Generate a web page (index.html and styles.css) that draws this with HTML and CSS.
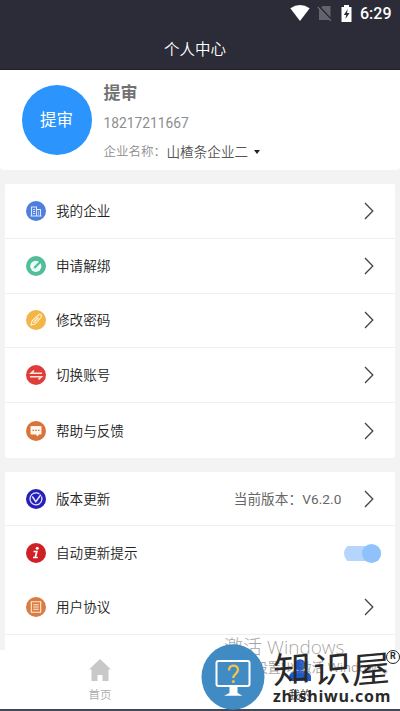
FILE: index.html
```html
<!DOCTYPE html>
<html lang="zh-CN">
<head>
<meta charset="utf-8">
<title>个人中心</title>
<link rel="stylesheet" href="styles.css">
</head>
<body>
<div class="screen">
  <header class="header">
    <div class="status">
      <svg class="wifi" width="20" height="16" viewBox="0 0 20 16"><path d="M.3 3.3Q10-3.2 19.7 3.3L10 16z" fill="#fff"/></svg>
      <svg class="sim" width="16" height="17" viewBox="0 0 16 17"><path d="M5.500 1H13.500v14H2V5z" fill="#62636b"/><path d="M1.500 1.500l13 14" stroke="#2b2c37" stroke-width="2.600"/><path d="M.8 2.200l13 13.600" stroke="#777881" stroke-width="1.200"/></svg>
      <svg class="battery" width="11" height="17" viewBox="0 0 11 17"><path d="M3 0h5v2h2.500v15H.5V2H3z" fill="#fff"/><path d="M6.800 4L2.800 10h2.400l-.7 4 4-6H6z" fill="#2b2c37"/></svg>
      <span class="clock">6:29</span>
    </div>
    <h1 class="title">个人中心</h1>
  </header>

  <section class="profile">
    <div class="avatar">提审</div>
    <div class="details">
      <div class="name">提审</div>
      <div class="phone">18217211667</div>
      <div class="company"><span>企业名称：</span><b>山楂条企业二</b><i class="caret"></i></div>
    </div>
  </section>

  <section class="card">
    <div class="row">
      <svg class="icon" viewBox="0 0 20 20"><circle cx="10" cy="10" r="10" fill="#507edb"/><g fill="none" stroke="#dbe7ff" stroke-width="1.100"><path d="M5.500 15V6h5v9M10.500 8.500h4V15M4.500 15h11M7 8.500h2M7 10.500h2M7 12.500h2M12 11h1M12 13h1"/></g></svg>
      <span class="label">我的企业</span><svg class="arrow" viewBox="0 0 10 18"><path d="M1 1l7.800 8L1 17"/></svg>
    </div>
    <div class="row">
      <svg class="icon" viewBox="0 0 20 20"><circle cx="10" cy="10" r="10" fill="#52bd98"/><circle cx="9.800" cy="10.300" r="5.600" fill="#e9fff7"/><path d="M8.500 11.800l7-7" stroke="#52bd98" stroke-width="2.200"/><path d="M7.500 12.500l2.500-.8-1.700-1.700z" fill="#52bd98"/></svg>
      <span class="label">申请解绑</span><svg class="arrow" viewBox="0 0 10 18"><path d="M1 1l7.800 8L1 17"/></svg>
    </div>
    <div class="row">
      <svg class="icon" viewBox="0 0 20 20"><circle cx="10" cy="10" r="10" fill="#f3b548"/><g fill="none" stroke="#fff3d0" stroke-width="1.100"><path d="M5 15l1-4 6.500-6a1.500 1.500 0 0 1 2.500 2.500L9 14zM7.500 12.500l5-5"/></g></svg>
      <span class="label">修改密码</span><svg class="arrow" viewBox="0 0 10 18"><path d="M1 1l7.800 8L1 17"/></svg>
    </div>
    <div class="row">
      <svg class="icon" viewBox="0 0 20 20"><circle cx="10" cy="10" r="10" fill="#df3e38"/><path d="M16 8.300H5l3-2.800M4 11.700h11.500l-3 2.800" fill="none" stroke="#ffe6df" stroke-width="1.600"/></svg>
      <span class="label">切换账号</span><svg class="arrow" viewBox="0 0 10 18"><path d="M1 1l7.800 8L1 17"/></svg>
    </div>
    <div class="row">
      <svg class="icon" viewBox="0 0 20 20"><circle cx="10" cy="10" r="10" fill="#d97439"/><path d="M5.500 5h9a1 1 0 0 1 1 1v6.500a1 1 0 0 1-1 1H13l-1.500 2-1.500-2H5.500a1 1 0 0 1-1-1V6a1 1 0 0 1 1-1z" fill="#fff5eb"/><path d="M6.500 9.300h1.300M9.300 9.300h1.300M12.100 9.300h1.300" stroke="#bb663a" stroke-width="1.300"/></svg>
      <span class="label">帮助与反馈</span><svg class="arrow" viewBox="0 0 10 18"><path d="M1 1l7.800 8L1 17"/></svg>
    </div>
  </section>

  <section class="card second">
    <div class="row">
      <svg class="icon" viewBox="0 0 20 20"><circle cx="10" cy="10" r="10" fill="#2520b8"/><g fill="none" stroke="#e7e6ff" stroke-width="1.300"><path d="M13.500 5A6 6 0 1 0 15.500 7.500"/><path d="M6.300 7.500l3.500 5.200 5-7" stroke-width="1.500"/></g></svg>
      <span class="label">版本更新</span><span class="version">当前版本：V6.2.0</span><svg class="arrow" viewBox="0 0 10 18"><path d="M1 1l7.800 8L1 17"/></svg>
    </div>
    <div class="row plain">
      <svg class="icon" viewBox="0 0 20 20"><circle cx="10" cy="10" r="10" fill="#cf2026"/><circle cx="11.200" cy="5.300" r="1.500" fill="#fff"/><path d="M7.500 8.500h3.300L9.200 14.500h2.600M7 14.500h3" fill="none" stroke="#fff" stroke-width="1.700"/></svg>
      <span class="label">自动更新提示</span><span class="switch"><i></i></span>
    </div>
    <div class="row">
      <svg class="icon" viewBox="0 0 20 20"><circle cx="10" cy="10" r="10" fill="#d97b43"/><path d="M5.300 4.800h9.400v10.400H5.300zM7.200 7.700h5.600M7.200 10h5.600M7.200 12.300h5.600" fill="none" stroke="#fff0d8" stroke-width="1.100"/></svg>
      <span class="label">用户协议</span><svg class="arrow" viewBox="0 0 10 18"><path d="M1 1l7.800 8L1 17"/></svg>
    </div>
  </section>

  <nav class="tabs">
    <div class="tab">
      <svg width="22" height="22" viewBox="0 0 22 22"><path d="M11 0l11 10.500h-2.500V22h-6v-6h-5v6h-6V10.500H0z" fill="#c8c8c8"/></svg>
      <span>首页</span>
    </div>
    <div class="tab active">
      <svg width="22" height="22" viewBox="0 0 22 22"><circle cx="11" cy="6" r="5.800" fill="#1d58c9"/><path d="M0 22v-4c0-4 5-6.500 11-6.500S22 14 22 18v4z" fill="#1d58c9"/></svg>
      <span>我的</span>
    </div>
  </nav>

  <div class="activate"><div class="act-title">激活 Windows</div><div class="act-sub">转到"设置"以激活 Windows。</div></div>
  <div class="watermark">
    <svg class="logo" width="64" height="66" viewBox="0 0 64 66"><ellipse cx="32" cy="33" rx="31.500" ry="32.700" fill="#408bc4"/><rect x="15.500" y="17" width="33" height="25" rx="2" fill="none" stroke="#fff" stroke-width="2"/><path d="M28.500 42h8v7l5 2.800H23l5.500-2.800z" fill="#fff"/><path d="M28 26.500c0-6.500 9-6 9-.8 0 4-4.700 4.200-4.700 8.300" fill="none" stroke="#f3c544" stroke-width="2.300"/><circle cx="32.300" cy="37.500" r="1.500" fill="#f3c544"/></svg>
    <div class="brand"><div class="brand-name"><span>知</span><span>识</span><span>屋</span></div><div class="domain">zhishiwu.com</div></div>
    <span class="reg">R</span>
  </div>
</div>
</body>
</html>
```
FILE: styles.css
```css
* { box-sizing: border-box; }
body { margin: 0; background: #f3f3f4; font-family: Roboto, "Noto Sans CJK SC", sans-serif; color: #333; }
.screen { position: relative; width: 400px; height: 711px; overflow: hidden; display: flex; flex-direction: column; }
.header { flex: none; height: 70px; background: #2b2c37; color: #fff; border-bottom: 1px solid #20212a; }
.status { height: 28px; padding: 0 9px 0 0; display: flex; justify-content: flex-end; align-items: center; }
.wifi { margin-right: 7px; margin-top: -2px; }
.sim { margin-right: 8px; margin-top: -1px; }
.battery { margin-right: 8px; margin-top: -1px; }
.clock { font-size: 16px; font-weight: 500; line-height: 28px; width: 31px; white-space: nowrap; }
.title { margin: 0; padding-right: 10px; font-size: 15.500px; font-weight: 350; line-height: 44px; text-align: center; }
.profile { flex: none; height: 100px; background: #fff; display: flex; padding-left: 21.500px; border-radius: 0 0 4px 4px; }
.avatar { width: 70px; height: 70px; margin: 15px 12px 0 0; border-radius: 50%; background: #2b94fd; color: #fff; font-size: 16.500px; line-height: 72px; text-align: center; }
.name { margin-top: 10px; height: 25px; font-size: 17px; line-height: 26px; font-weight: 700; color: #727272; }
.phone { margin-top: 8px; height: 20px; font-size: 13.800px; line-height: 20px; color: #8d8d8d; }
.company { margin-top: 8px; height: 22px; display: flex; align-items: center; font-size: 12.500px; line-height: 22px; color: #8d8d8d; font-weight: 350; }
.company b { margin-left: .5px; font-size: 13.600px; font-weight: 350; color: #555; }
.caret { margin-left: 5.500px; border: 3.500px solid transparent; border-top: 4px solid #222; border-bottom: 0; }
.card { flex: none; margin: 14px 5px 0; background: #fff; border-radius: 2px; }
.row { height: 54.800px; padding: 0 21.500px 0 21px; display: flex; align-items: center; border-bottom: 1px solid #efefef; font-size: 13.600px; }
.card:not(.second) .row:last-child { border: 0; }
.second { margin-top: 14px; height: 180px; }
.second .row { height: 54.200px; }
.row.plain { border: 0; padding-right: 14px; }
.icon { width: 20px; height: 20px; margin-right: 10px; }
.label { flex: 1; line-height: 20px; font-weight: 350; color: #222; }
.arrow { width: 10px; height: 18px; fill: none; stroke: #444; stroke-width: 1.300; }
.version { margin-right: 22px; color: #666; font-size: 13.600px; line-height: 20px; letter-spacing: .1px; }
.switch { width: 37px; height: 19px; display: flex; align-items: center; justify-content: flex-end; background: linear-gradient(#b5d5fd, #b5d5fd) center / 100% 15px no-repeat; border-radius: 10px; }
.switch i { width: 19px; height: 19px; border-radius: 50%; background: #8fc2fb; }
.tabs { position: absolute; left: 0; bottom: 0; width: 400px; height: 61px; background: #fff; border-bottom: 2px solid #40485a; display: flex; }
.tab { flex: 1; display: flex; flex-direction: column; align-items: center; padding-top: 9px; font-size: 11.500px; color: #aaa; }
.tab svg { flex: none; }
.tab span { margin-top: 6px; line-height: 16px; font-weight: 350; }
.tab.active { color: #333; }
.activate { position: absolute; left: 224px; top: 634.500px; color: rgba(125,125,125,.7); white-space: nowrap; font-family: "Open Sans", "Noto Sans CJK SC", sans-serif; }
.act-title { font-size: 19px; line-height: 24px; font-weight: 300; }
.act-sub { font-size: 12.900px; line-height: 16px; }
.watermark { position: absolute; left: 201px; top: 643.500px; display: flex; color: #292929; }
.brand { margin-left: 8px; }
.brand-name { height: 48px; font-size: 38px; line-height: 45px; font-weight: 400; display: flex; gap: 1.500px; font-family: "Noto Sans CJK SC", sans-serif; }
.brand-name span { transform: skewY(-5deg) scaleY(.94); }
.domain { height: 20px; margin-top: -6px; font-family: "Open Sans", sans-serif; font-size: 16px; line-height: 20px; font-weight: 700; letter-spacing: .75px; }
.reg { position: absolute; left: 185px; top: 6px; width: 14px; height: 14px; border: 1.500px solid #222; border-radius: 50%; font-size: 9px; line-height: 11px; font-weight: 700; text-align: center; }
```
